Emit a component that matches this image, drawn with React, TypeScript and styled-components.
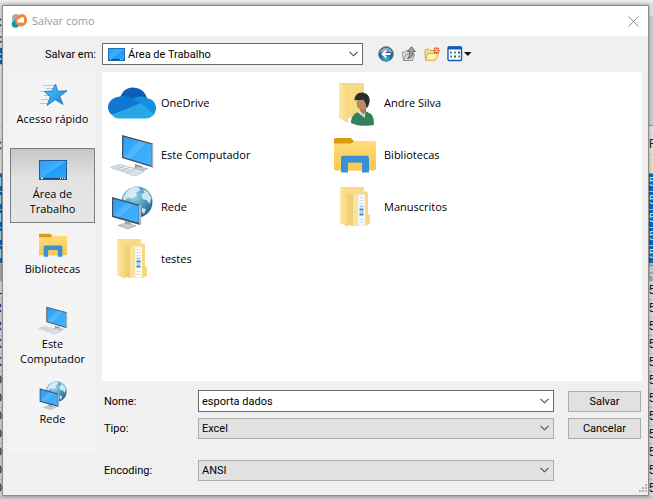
import React from "react";
import styled, { createGlobalStyle } from "styled-components";

const GlobalStyle = createGlobalStyle`
  *, *::before, *::after { box-sizing: border-box; }
  html, body { margin: 0; height: 100%; }
  #root { height: 100%; }
  body { overflow: hidden; color: #000; font: 11px/15px Roboto, "Liberation Sans", sans-serif; }
  button, input, select { font: inherit; color: inherit; margin: 0; }
  svg { display: block; flex: none; }
`;

const shellFont = `"Open Sans", "Noto Sans", sans-serif`;

/* ---------- layout ---------- */

const Desktop = styled.div`
  display: grid;
  grid-template: 5px minmax(0, 1fr) 3px / 2px minmax(0, 1fr) 4px;
  height: 100vh;
  background: #c9c9c9;
`;

const TopEdge = styled.div`
  grid-column: 1 / -1;
  background: linear-gradient(#efefef, #dcdcdc);
`;

const Sheet = styled.div<{ $end?: boolean }>`
  display: flex;
  flex-direction: column;
  overflow: hidden;
  font: 12px/17px "Liberation Sans", sans-serif;
  --align: ${(p) => (p.$end ? "flex-end" : "flex-start")};
`;

const tones = {
  light: ["#e4e4e4", "#222", "#d0d0d0"],
  gray: ["#cfcfcf", "#222", "#8f8f8f"],
  cream: ["#e6e2c8", "#222", "#9c9a88"],
  blue: ["#0b67b8", "#cfe6fa", "#9cc8ee"],
  dim: ["#a3acb8", "#e8edf2", "#cfcfcf"],
  cell: ["#dadada", "#15131c", "#c2c2c2"],
};
type Tone = keyof typeof tones;

const Cell = styled.div<{ $tone: Tone; $h: number }>`
  display: flex;
  flex: none;
  align-items: center;
  justify-content: var(--align);
  height: ${(p) => p.$h}px;
  overflow: hidden;
  background: ${(p) => tones[p.$tone][0]};
  color: ${(p) => tones[p.$tone][1]};
  border-bottom: 1px solid ${(p) => tones[p.$tone][2]};
`;

const Dialog = styled.main`
  display: flex;
  flex-direction: column;
  border: 1px solid #8c8c8c;
  background: #f0f0f0;
  box-shadow: 0 0 4px rgba(0, 0, 0, 0.35);
  z-index: 1;
`;

const TitleBar = styled.header`
  display: flex;
  flex: none;
  align-items: center;
  gap: 5px;
  height: 30px;
  padding: 0 7px 0 8px;
  background: #fff;
`;

const Title = styled.h1`
  flex: 1;
  margin: 0;
  font: 11px/16px ${shellFont};
  color: #999;
`;

const CloseButton = styled.button`
  padding: 2px;
  border: 0;
  background: none;
`;

const Body = styled.form`
  flex: 1;
  display: grid;
  grid-template: 36px minmax(0, 1fr) / 87px minmax(0, 1fr);
  column-gap: 6px;
  padding: 0 6px;
`;

const ToolLabel = styled.label`
  align-self: center;
  justify-self: end;
`;

const Toolbar = styled.div`
  display: flex;
  align-items: center;
  gap: 7px;
`;

const LocationBox = styled.div`
  flex: 0 1 261px;
  margin-right: 8px;
`;

const ToolButton = styled.button`
  padding: 0;
  border: 0;
  background: none;
`;

const Places = styled.nav`
  align-self: start;
  height: 380px;
  padding: 1px;
  background: #f4f4f4;
`;

const Place = styled.button<{ $active?: boolean }>`
  display: flex;
  flex-direction: column;
  align-items: center;
  width: 100%;
  height: 75px;
  padding: 5px 0 0;
  border: 1px solid ${(p) => (p.$active ? "#7c7c7c" : "transparent")};
  background: ${(p) => (p.$active ? "linear-gradient(#c6c6c6, #e2e2e2 40%, #e6e6e6)" : "none")};
  font: 11px/15px ${shellFont};
  white-space: pre-line;
`;

const Content = styled.div`
  display: grid;
  grid-template-rows: 309px auto;
  align-content: start;
`;

const FileList = styled.ul`
  display: grid;
  grid-template-columns: repeat(auto-fill, 223px);
  grid-auto-rows: 52px;
  margin: 0;
  padding: 5px 6px;
  list-style: none;
  background: #fff;
`;

const FileItem = styled.li`
  display: flex;
  align-items: center;
  gap: 5px;
  font: 11px/16px ${shellFont};
`;

const Fields = styled.div`
  display: grid;
  grid-template-columns: 94px minmax(0, 1fr) 73px;
  grid-auto-rows: 22px;
  row-gap: 5px;
  align-items: center;
  padding: 9px 1px 0 2px;
`;

const EncodingFields = styled(Fields)`
  padding-top: 20px;
`;

const Combo = styled.div<{ $flat?: boolean }>`
  display: grid;
  grid-template-columns: minmax(0, 1fr) 18px;
  align-items: center;
  height: ${(p) => (p.$flat ? 21 : 22)}px;
  border: 1px solid ${(p) => (p.$flat ? "#adadad" : "#6b6b6b")};
  background: ${(p) => (p.$flat ? "#e1e1e1" : "#fff")};

  > svg { grid-area: 1 / 2; justify-self: center; pointer-events: none; }
`;

const FieldSlot = styled.div`
  margin-right: 14px;
`;

const Select = styled.select<{ $icon?: boolean }>`
  grid-area: 1 / 1 / 2 / 3;
  width: 100%;
  padding: 0 20px 0 ${(p) => (p.$icon ? 25 : 3)}px;
  border: 0;
  outline: 0;
  appearance: none;
  background: none;
`;

const SelectIcon = styled.span`
  grid-area: 1 / 1;
  padding-left: 5px;
  pointer-events: none;
`;

const TextInput = styled.input`
  grid-area: 1 / 1;
  width: 100%;
  padding: 0 3px;
  border: 0;
  outline: 0;
  background: none;
`;

const PushButton = styled.button`
  height: 21px;
  padding: 0;
  border: 1px solid #adadad;
  background: #e1e1e1;
`;

const GripRow = styled.div`
  grid-column: 1 / -1;
  display: flex;
  justify-content: flex-end;
  margin-right: -5px;
  padding: 2px 0;
`;

/* ---------- icons ---------- */

const Gradients = () => (
  <svg width="0" height="0" aria-hidden="true">
    <defs>
      <linearGradient id="screen" x1="0" y1="0" x2="1" y2="1">
        <stop offset="0" stopColor="#2e9bf5" />
        <stop offset=".5" stopColor="#3fb0ff" />
        <stop offset=".52" stopColor="#1f9cf8" />
        <stop offset="1" stopColor="#2ba6ff" />
      </linearGradient>
      <linearGradient id="folder" x1="0" y1="0" x2="0" y2="1">
        <stop offset="0" stopColor="#ffdc78" />
        <stop offset="1" stopColor="#f8c64f" />
      </linearGradient>
      <linearGradient id="flap" x1="0" y1="0" x2="1" y2="0">
        <stop offset="0" stopColor="#fde9a4" />
        <stop offset="1" stopColor="#f6d57c" />
      </linearGradient>
      <radialGradient id="globe" cx=".4" cy=".3" r=".75">
        <stop offset="0" stopColor="#a9d7ea" />
        <stop offset=".5" stopColor="#4d9fc4" />
        <stop offset="1" stopColor="#1e5f88" />
      </radialGradient>
      <radialGradient id="orb" cx=".5" cy=".85" r=".8">
        <stop offset="0" stopColor="#35c3ee" />
        <stop offset=".55" stopColor="#155f9e" />
        <stop offset="1" stopColor="#51718f" />
      </radialGradient>
      <linearGradient id="star" x1="0" y1="0" x2="1" y2="1">
        <stop offset="0" stopColor="#58c4fb" />
        <stop offset="1" stopColor="#1584dd" />
      </linearGradient>
    </defs>
  </svg>
);

const AppLogo = () => (
  <svg width="16" height="16" viewBox="0 0 16 16">
    <circle cx="5" cy="5" r="4" fill="#a9aaab" />
    <circle cx="4.500" cy="11" r="3.800" fill="#159a9c" />
    <path d="M7.500 2.500 10 1l2.500.3 2.200 1.500 1.200 2.400v3.600l-1.500 2.600-2.600 1.800H8.200L5.600 11.500 4.300 9V5.600z" fill="#f5873c" />
    <path d="M6.500 9.500V6.600l2.300-.8 1.500-1.500 2.700.3v4.900z" fill="#fff" />
  </svg>
);

const CloseIcon = () => (
  <svg width="11" height="11" viewBox="0 0 11 11">
    <path d="M.5.5l10 10M10.500.5l-10 10" stroke="#8a8a8a" fill="none" />
  </svg>
);

const Chevron = () => (
  <svg width="9" height="6" viewBox="0 0 9 6">
    <path d="M.5.800l4 4 4-4" stroke="#4a4a4a" strokeWidth="1.100" fill="none" />
  </svg>
);

const DesktopIcon = () => (
  <svg width="17" height="13" viewBox="0 0 17 13">
    <rect x=".5" y=".5" width="16" height="12" fill="url(#screen)" stroke="#1b6fb4" />
    <path d="M1 11.500h15" stroke="#0f4f8a" />
    <path d="M2 11.500h1M12 11.500h1M14 11.500h1" stroke="#d7efff" />
  </svg>
);

const DesktopPlaceIcon = () => (
  <svg width="32" height="32" viewBox="0 0 32 32">
    <rect x="2.500" y="6.500" width="27" height="19" fill="url(#screen)" stroke="#1f5d92" />
    <path d="M3 24.500h26" stroke="#10497c" />
    <path d="M4 24.500h2M23 24.500h1M25 24.500h1M27 24.500h1" stroke="#fff" />
  </svg>
);

const StarIcon = () => (
  <svg width="32" height="32" viewBox="0 0 32 32">
    <path d="M6 6.500h11M9 9.500h8M3 12.500h10M7 16.500h5M4 20.500h7M3 24.500h7" stroke="#8fc3ea" strokeWidth=".8" />
    <path d="M18.500 5l2.300 7.300 9.200-.5-7.200 5.500 3.200 8.200-7.700-4.800-8.300 5.800 3.200-8.700-6-5.300 7.800-.5z" fill="url(#star)" stroke="#1b6fb5" strokeWidth=".8" />
  </svg>
);

const ComputerIcon = ({ size }: { size: number }) => (
  <svg width={size} height={size} viewBox="0 0 48 48">
    <path d="M27 33l7 2v4l-7-1z" fill="#8b959d" />
    <path d="M21 38.500l9-3 10 2.200-8 3.600z" fill="#c3cbd1" stroke="#93a0a9" strokeWidth=".5" />
    <path d="M14 4l31 8.500v24L14 27z" fill="#3e4f5d" />
    <path d="M43.500 12.200l1.800.5v23.800l-1.800.4z" fill="#aab5bd" />
    <path d="M15.300 5.700l28 7.600v21.200l-28-8.500z" fill="url(#screen)" />
    <path d="M15.300 26L31 10l12.300 3.300v21.200z" fill="#70c8ff" opacity=".35" />
    <path d="M2.500 36.500L12 33.500l24 7-9.500 4.500z" fill="#eef1f3" stroke="#aab4bb" strokeWidth=".7" />
    <path d="M5 35.600l24 8M8 34.600l24 7.500M8 38.300l8-3.500M13.500 40l8-3.500M19 41.700l8-3.500" stroke="#b0bac1" strokeWidth=".7" />
  </svg>
);

const NetworkIcon = ({ size }: { size: number }) => (
  <svg width={size} height={size} viewBox="0 0 48 48">
    <circle cx="29" cy="19" r="15.500" fill="url(#globe)" />
    <path d="M19 8l6-4 6 .5 1 3-4 2 1 3-5 3-4-1-4 4-1-4zM35 6l5 3 3.500 6-2 6-3-4-4-1-1-5 3-1zM34 25l4 1-2 5-2-2z" fill="#dceff5" opacity=".9" />
    <path d="M4 14l28 8v20L4 34z" fill="#3e4f5d" />
    <path d="M31 21.700l2.200.600v19l-2.200.800z" fill="#aab5bd" />
    <path d="M5.200 15.800l25.500 7.300v16.700L5.200 32.500z" fill="url(#screen)" />
    <path d="M5.200 32.500L19 19.800l11.700 3.300v16.700z" fill="#70c8ff" opacity=".35" />
    <path d="M17 38l6 2v3l-6-1z" fill="#8b959d" />
    <path d="M10 42.500l8-2.500 10 2.800-8 3.200z" fill="#c3cbd1" stroke="#93a0a9" strokeWidth=".6" />
  </svg>
);

const CloudIcon = () => (
  <svg width="48" height="48" viewBox="0 0 48 48">
    <path d="M12 19C14 12 19 8.500 24.500 8.500c7 0 12.500 4 14.500 10.500L31 28z" fill="#0a60b5" />
    <path d="M13 17.500c5-1.500 9 .5 12 2.500l8 5-29 11C1.500 34 0 31.500 0 28.500c0-6 5-11 13-11z" fill="#0f78d4" />
    <path d="M25 20c4-3 10-3.200 14-.8 5 .3 9 4.300 9 9.800 0 3-1.200 5.500-3 7.500L32 24.500z" fill="#1490df" />
    <path d="M4 36l28.500-11.800L46 35c-2 3-5 4.500-8 4.500H11c-3 0-5.500-1.500-7-3.500z" fill="#28a8ea" />
  </svg>
);

const LibraryIcon = ({ size }: { size: number }) => (
  <svg width={size} height={size} viewBox="0 0 48 48">
    <path d="M3 8.500C3 7.500 4 7 5 7h14.500l4 3.500-4 4H3z" fill="#dc9a10" />
    <path d="M3 12.500h17l3.500-2.500H43c1.300 0 2 .800 2 2v25.500c0 1-.8 2-2 2H5c-1.200 0-2-1-2-2z" fill="url(#folder)" />
    <path d="M10 41.500V27c0-1.300 1-2.200 2.200-2.200h23.600c1.200 0 2.200 1 2.200 2.200v14.500h-7V31.800H17v9.700z" fill="#3a8fd6" />
    <path d="M17 31.800h14v7.700H17z" fill="#f7ca5d" />
  </svg>
);

const UserFolderIcon = () => (
  <svg width="48" height="48" viewBox="0 0 48 48">
    <path d="M8 4h25v35H13z" fill="#f8da85" />
    <path d="M8 4l9 6v34l-9-5z" fill="url(#flap)" />
    <path d="M20 44c0-6 3-10 8-11l5-2 5 3c4 1 5 6 5 12-8 1.500-17 1-23-2z" fill="#33805c" />
    <path d="M26.500 33l3-1.500 5 .5-.8 7z" fill="#d9e4e4" />
    <path d="M29 27h6v5.500l-2.500 3-3.500-3.500z" fill="#a87a54" />
    <ellipse cx="31" cy="24" rx="5.500" ry="7" fill="#b98a63" />
    <path d="M23.500 21.500c0-5 3-8 7.500-8s8.500 3.500 7.500 9.500c-.5 3-1.500 5-3 6.500l-.8-5-2.500-4c-3 1-6 0-8.700 1z" fill="#2c2c2c" />
  </svg>
);

const DocsFolderIcon = () => (
  <svg width="48" height="48" viewBox="0 0 48 48">
    <path d="M9 4h24v4l4 2v29H12z" fill="#f8db88" />
    <path d="M27 11l8 1v31l-8-1z" fill="#fafafa" stroke="#d9dcde" strokeWidth=".5" />
    <path d="M28.500 14.500h4M28.500 17.500h4M28.500 20.500h4M28.500 36.500h4M28.500 39.500h4" stroke="#c6d5de" strokeWidth=".8" />
    <path d="M28.500 26.500h4M28.500 31.500h4" stroke="#3f86b5" strokeWidth="2" />
    <path d="M28.500 29h4M28.500 23.500h4" stroke="#9cc7df" strokeWidth="1.500" />
    <path d="M34 8l3 2v21l2 1v9l-5 2z" fill="#f7d983" />
    <path d="M17 11l5-1v33l-5-1z" fill="#efcf79" />
    <path d="M22 12l5-1v32h-5z" fill="#fae39c" />
    <path d="M9 4l8 5v35l-8-4z" fill="url(#flap)" />
  </svg>
);

const BackIcon = () => (
  <svg width="16" height="16" viewBox="0 0 16 16">
    <circle cx="8" cy="8" r="7.300" fill="url(#orb)" stroke="#4b5f70" strokeWidth=".8" />
    <path d="M1.800 6.500C3 .5 13 .5 14.200 6.500 11 5 5 5 1.800 6.500z" fill="#b5c3cf" opacity=".75" />
    <path d="M12.500 8H5M8.200 4.500L4.500 8l3.700 3.500" stroke="#fff" strokeWidth="2" fill="none" />
  </svg>
);

const UpIcon = () => (
  <svg width="16" height="16" viewBox="0 0 16 16">
    <path d="M1.500 6h3l1-1.500h3V14l-6 .5z" fill="#e6e6e6" stroke="#8b8b8b" strokeWidth=".9" />
    <path d="M2.500 14.500L5 8h8.500l-2 6.500z" fill="#d8d8d8" stroke="#8b8b8b" strokeWidth=".9" />
    <path d="M6.500 12.500c2-1.500 2.500-4 2.300-7H6.500L10.500.8l3.800 4.700H12c.3 4-1.500 6.500-5.500 7z" fill="#a2a2a2" stroke="#4b4b4b" strokeWidth=".8" />
  </svg>
);

const NewFolderIcon = () => (
  <svg width="16" height="16" viewBox="0 0 16 16">
    <path d="M1 4.500l1-1.200h3l1 1.200h5V14H1.500z" fill="#f6dd88" stroke="#c79a35" strokeWidth=".8" />
    <path d="M1.500 14.200L4 7.500h10.500l-3 6.700z" fill="#fff0ad" stroke="#cfa33c" strokeWidth=".8" />
    <path d="M12.500 1v7M9 4.500h7M10 2l5 5M15 2l-5 5" stroke="#e0572d" strokeWidth="1.200" />
    <circle cx="12.500" cy="4.500" r="1.500" fill="#ffd45c" />
  </svg>
);

const ViewIcon = () => (
  <svg width="25" height="16" viewBox="0 0 25 16">
    <rect x="1" y="1" width="13.500" height="13.500" rx="1" fill="#fff" stroke="#1259b8" strokeWidth="1.400" />
    <path d="M1 2h13.500" stroke="#1259b8" strokeWidth="3" />
    <path d="M3 6.500h2M3 10.500h2" stroke="#5476a8" strokeWidth="2" />
    <path d="M7 6.500h2" stroke="#3f9a5a" strokeWidth="2" />
    <path d="M11 10.500h2" stroke="#5d9a50" strokeWidth="2" />
    <path d="M11 6.500h2M7 10.500h2" stroke="#38557e" strokeWidth="2" />
    <path d="M17 6h7.500L20.800 10z" fill="#111" />
  </svg>
);

const GripIcon = () => (
  <svg width="9" height="9" viewBox="0 0 9 9" fill="#b3b3b3">
    <path d="M7 0h2v2H7zM7 3h2v2H7zM4 3h2v2H4zM7 6h2v2H7zM4 6h2v2H4zM1 6h2v2H1z" />
  </svg>
);

/* ---------- data ---------- */

const places = [
  { label: "Acesso rápido", icon: <StarIcon /> },
  { label: "Área de\nTrabalho", icon: <DesktopPlaceIcon />, active: true },
  { label: "Bibliotecas", icon: <LibraryIcon size={32} /> },
  { label: "Este\nComputador", icon: <ComputerIcon size={32} /> },
  { label: "Rede", icon: <NetworkIcon size={32} /> },
];

const files = [
  { label: "OneDrive", icon: <CloudIcon /> },
  { label: "Andre Silva", icon: <UserFolderIcon /> },
  { label: "Este Computador", icon: <ComputerIcon size={48} /> },
  { label: "Bibliotecas", icon: <LibraryIcon size={48} /> },
  { label: "Rede", icon: <NetworkIcon size={48} /> },
  { label: "Manuscritos", icon: <DocsFolderIcon /> },
  { label: "testes", icon: <DocsFolderIcon /> },
];

type CellData = [Tone, number, string?];
const repeat = (n: number, cell: CellData): CellData[] => Array.from({ length: n }, () => cell);

const leftCells: CellData[] = [
  ["light", 10],
  ["light", 17, "C"],
  ["light", 16, "c"],
  ["blue", 17, "c"],
  ["light", 63],
  ["light", 12],
  ["light", 14, "C"],
  ["cream", 20],
  ...repeat(5, ["blue", 18, "I"]),
  ["dim", 18],
  ["cell", 18, "L"],
  ["cell", 18, "R"],
  ["cell", 18, "R"],
  ["cell", 18, "X"],
  ["cell", 18, "X"],
  ...repeat(8, ["cell", 18, "0"]),
];

const rightCells: CellData[] = [
  ["light", 12],
  ["gray", 109],
  ["light", 9],
  ["light", 20, "R"],
  ["cream", 19],
  ...repeat(5, ["blue", 18, "5"]),
  ["dim", 18, "5"],
  ...repeat(13, ["cell", 18, "5"]),
];

const SheetEdge = ({ cells, end }: { cells: CellData[]; end?: boolean }) => (
  <Sheet $end={end}>
    {cells.map(([tone, height, text], i) => (
      <Cell key={i} $tone={tone} $h={height}>{text}</Cell>
    ))}
  </Sheet>
);

export default function App() {
  return (
    <>
      <GlobalStyle />
      <Desktop>
        <TopEdge />
        <SheetEdge cells={leftCells} end />
        <Dialog>
          <TitleBar>
            <AppLogo />
            <Title>Salvar como</Title>
            <CloseButton type="button" aria-label="Fechar"><CloseIcon /></CloseButton>
          </TitleBar>
          <Body onSubmit={(e) => e.preventDefault()}>
            <ToolLabel htmlFor="location">Salvar em:</ToolLabel>
            <Toolbar>
              <LocationBox>
                <Combo>
                  <SelectIcon><DesktopIcon /></SelectIcon>
                  <Select id="location" $icon><option>Área de Trabalho</option></Select>
                  <Chevron />
                </Combo>
              </LocationBox>
              <ToolButton type="button" aria-label="Voltar"><BackIcon /></ToolButton>
              <ToolButton type="button" aria-label="Um nível acima"><UpIcon /></ToolButton>
              <ToolButton type="button" aria-label="Nova pasta"><NewFolderIcon /></ToolButton>
              <ToolButton type="button" aria-label="Exibir"><ViewIcon /></ToolButton>
            </Toolbar>
            <Places>
              {places.map((p) => (
                <Place key={p.label} type="button" $active={p.active}>
                  {p.icon}
                  {p.label}
                </Place>
              ))}
            </Places>
            <Content>
              <FileList>
                {files.map((f) => <FileItem key={f.label}>{f.icon}{f.label}</FileItem>)}
              </FileList>
              <Fields>
                <label htmlFor="name">Nome:</label>
                <FieldSlot>
                  <Combo><TextInput id="name" defaultValue="esporta dados" /><Chevron /></Combo>
                </FieldSlot>
                <PushButton type="submit">Salvar</PushButton>
                <label htmlFor="type">Tipo:</label>
                <FieldSlot>
                  <Combo $flat><Select id="type"><option>Excel</option></Select><Chevron /></Combo>
                </FieldSlot>
                <PushButton type="button">Cancelar</PushButton>
              </Fields>
              <EncodingFields>
                <label htmlFor="encoding">Encoding:</label>
                <FieldSlot>
                  <Combo $flat><Select id="encoding"><option>ANSI</option></Select><Chevron /></Combo>
                </FieldSlot>
              </EncodingFields>
            </Content>
            <GripRow><GripIcon /></GripRow>
          </Body>
        </Dialog>
        <SheetEdge cells={rightCells} />
      </Desktop>
      <Gradients />
    </>
  );
}
